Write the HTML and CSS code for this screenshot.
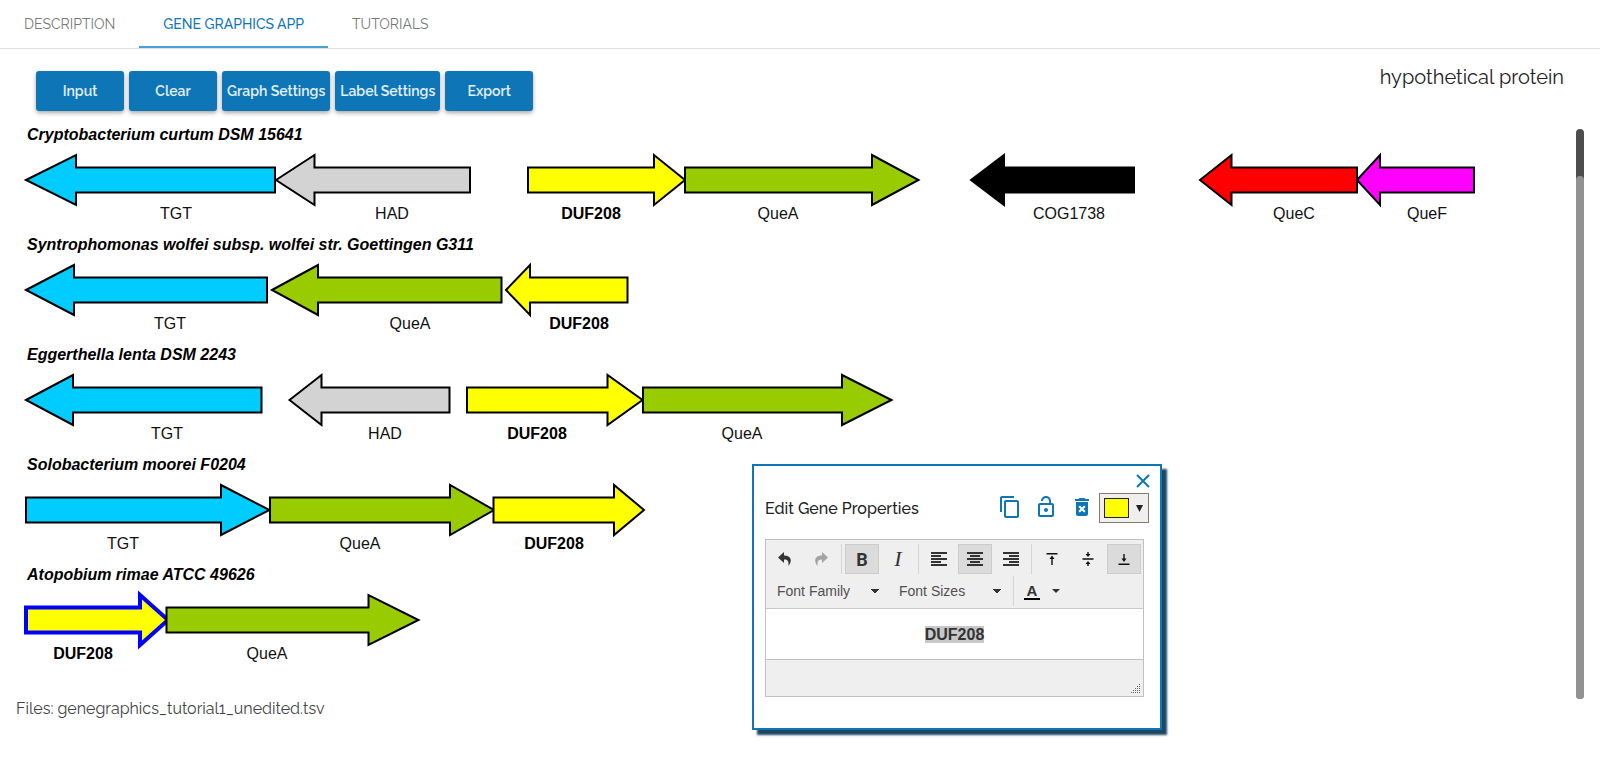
FILE: index.html
```html
<!DOCTYPE html>
<html lang="en">
<head>
<meta charset="utf-8">
<title>Gene Graphics</title>
<link rel="stylesheet" href="styles.css">
</head>
<body>
<nav class="tabs">
  <a class="tab" href="#description">DESCRIPTION</a>
  <a class="tab tab-active" href="#app" aria-current="page">GENE GRAPHICS APP</a>
  <a class="tab" href="#tutorials">TUTORIALS</a>
</nav>
<main class="app">
  <div class="actions">
    <button class="action" type="button">Input</button>
    <button class="action" type="button">Clear</button>
    <button class="action" type="button">Graph Settings</button>
    <button class="action" type="button">Label Settings</button>
    <button class="action" type="button">Export</button>
    <p class="hover-name">hypothetical protein</p>
  </div>
  <div class="viewer">
    <div class="genomes">
      <svg class="genome">
        <text class="organism" x="27" y="11">Cryptobacterium curtum DSM 15641</text>
        <polygon class="gene tgt" points="26,51 76,26 76,38.5 275,38.5 275,63.5 76,63.5 76,76"/>
        <polygon class="gene had" points="276,51 314.5,26 314.5,38.5 470,38.5 470,63.5 314.5,63.5 314.5,76"/>
        <polygon class="gene duf" points="528,38.5 654,38.5 654,26 685,51 654,76 654,63.5 528,63.5"/>
        <polygon class="gene quea" points="685,38.5 872,38.5 872,26 918.5,51 872,76 872,63.5 685,63.5"/>
        <polygon class="gene cog" points="971,51 1004,26 1004,38.5 1134,38.5 1134,63.5 1004,63.5 1004,76"/>
        <polygon class="gene quec" points="1200,51 1231.5,26 1231.5,38.5 1357,38.5 1357,63.5 1231.5,63.5 1231.5,76"/>
        <polygon class="gene quef" points="1357,51 1380,26 1380,38.5 1474,38.5 1474,63.5 1380,63.5 1380,76"/>
        <text class="label" x="176" y="90">TGT</text>
        <text class="label" x="392" y="90">HAD</text>
        <text class="label strong" x="591" y="90">DUF208</text>
        <text class="label" x="778" y="90">QueA</text>
        <text class="label" x="1069" y="90">COG1738</text>
        <text class="label" x="1294" y="90">QueC</text>
        <text class="label" x="1427" y="90">QueF</text>
      </svg>
      <svg class="genome">
        <text class="organism" x="27" y="11">Syntrophomonas wolfei subsp. wolfei str. Goettingen G311</text>
        <polygon class="gene tgt" points="26,51 74,26 74,38.5 267,38.5 267,63.5 74,63.5 74,76"/>
        <polygon class="gene quea" points="272,51 318,26 318,38.5 501.5,38.5 501.5,63.5 318,63.5 318,76"/>
        <polygon class="gene duf" points="506,51 530,26 530,38.5 627.5,38.5 627.5,63.5 530,63.5 530,76"/>
        <text class="label" x="170" y="90">TGT</text>
        <text class="label" x="410" y="90">QueA</text>
        <text class="label strong" x="579" y="90">DUF208</text>
      </svg>
      <svg class="genome">
        <text class="organism" x="27" y="11">Eggerthella lenta DSM 2243</text>
        <polygon class="gene tgt" points="26,51 73,26 73,38.5 261.5,38.5 261.5,63.5 73,63.5 73,76"/>
        <polygon class="gene had" points="289.5,51 321.5,26 321.5,38.5 449.5,38.5 449.5,63.5 321.5,63.5 321.5,76"/>
        <polygon class="gene duf" points="467,38.5 607.5,38.5 607.5,26 642.5,51 607.5,76 607.5,63.5 467,63.5"/>
        <polygon class="gene quea" points="643,38.5 842,38.5 842,26 891.5,51 842,76 842,63.5 643,63.5"/>
        <text class="label" x="167" y="90">TGT</text>
        <text class="label" x="385" y="90">HAD</text>
        <text class="label strong" x="537" y="90">DUF208</text>
        <text class="label" x="742" y="90">QueA</text>
      </svg>
      <svg class="genome">
        <text class="organism" x="27" y="11">Solobacterium moorei F0204</text>
        <polygon class="gene tgt" points="26,38.5 221,38.5 221,26 269.500,51 221,76 221,63.5 26,63.5"/>
        <polygon class="gene quea" points="270,38.5 450,38.5 450,26 494,51 450,76 450,63.5 270,63.5"/>
        <polygon class="gene duf" points="493.5,38.5 614,38.5 614,26 644,51 614,76 614,63.5 493.5,63.5"/>
        <text class="label" x="123" y="90">TGT</text>
        <text class="label" x="360" y="90">QueA</text>
        <text class="label strong" x="554" y="90">DUF208</text>
      </svg>
      <svg class="genome">
        <text class="organism" x="27" y="11">Atopobium rimae ATCC 49626</text>
        <polygon class="gene duf selected" points="26,38.5 140,38.5 140,26 168,51 140,76 140,63.5 26,63.5"/>
        <polygon class="gene quea" points="166.5,38.5 368.5,38.5 368.5,26 418.5,51 368.5,76 368.5,63.5 166.5,63.5"/>
        <text class="label strong" x="83" y="90">DUF208</text>
        <text class="label" x="267" y="90">QueA</text>
      </svg>
    </div>
    <div class="scroll-track"><div class="scroll-thumb"></div></div>
  </div>
  <p class="files">Files: genegraphics_tutorial1_unedited.tsv</p>
</main>

<section class="dialog" role="dialog" aria-labelledby="dialog-title">
  <button class="close" type="button" aria-label="Close">
    <svg class="close-icon" viewBox="0 0 14 14"><path d="M1 1L13 13M13 1L1 13"/></svg>
  </button>
  <header class="dialog-head">
    <h2 class="dialog-title" id="dialog-title">Edit Gene Properties</h2>
    <button class="icon-button" type="button" aria-label="Copy"><svg class="icon" viewBox="0 0 24 24"><path d="M16 1H4c-1.100 0-2 .9-2 2v14h2V3h12V1zm3 4H8c-1.100 0-2 .9-2 2v14c0 1.100.9 2 2 2h11c1.100 0 2-.9 2-2V7c0-1.100-.9-2-2-2zm0 16H8V7h11v14z"/></svg></button>
    <button class="icon-button" type="button" aria-label="Unlock"><svg class="icon" viewBox="0 0 24 24"><path d="M12 17c1.100 0 2-.9 2-2s-.9-2-2-2-2 .9-2 2 .9 2 2 2zm6-9h-1V6c0-2.760-2.240-5-5-5S7 3.240 7 6h1.900c0-1.710 1.390-3.100 3.100-3.100s3.100 1.390 3.100 3.100v2H6c-1.100 0-2 .9-2 2v10c0 1.100.9 2 2 2h12c1.100 0 2-.9 2-2V10c0-1.100-.9-2-2-2zm0 12H6V10h12v10z"/></svg></button>
    <button class="icon-button" type="button" aria-label="Delete"><svg class="icon" viewBox="0 0 24 24"><path fill-rule="evenodd" d="M6 19c0 1.100.9 2 2 2h8c1.100 0 2-.9 2-2V7H6v12zM8.460 11.880l1.410-1.410L12 12.590l2.120-2.120 1.410 1.410L13.410 14l2.120 2.120-1.410 1.410L12 15.410l-2.120 2.120-1.410-1.410L10.590 14l-2.130-2.120zM15.500 4l-1-1h-5l-1 1H5v2h14V4z"/></svg></button>
    <button class="color-button" type="button" aria-label="Gene color"><span class="swatch"></span><svg class="color-arrow" viewBox="0 0 7 7"><path d="M0 0H7L3.500 7z"/></svg></button>
  </header>
  <div class="editor">
    <div class="editor-bar">
      <div class="editor-row">
        <div class="group">
          <button class="tool" type="button" aria-label="Undo"><svg class="tool-icon" viewBox="0 0 16 16"><path d="M7 1L1 6.500 7 12V8.500C10.500 8.300 12 10 11.500 15 15.500 10 14.500 4.500 7 4.500z"/></svg></button>
          <button class="tool" type="button" aria-label="Redo" disabled><svg class="tool-icon" viewBox="0 0 16 16"><path d="M9 1L15 6.500 9 12V8.500C5.500 8.300 4 10 4.500 15 .5 10 1.500 4.500 9 4.500z"/></svg></button>
        </div>
        <div class="group">
          <button class="tool tool-on bold" type="button" aria-pressed="true">B</button>
          <button class="tool italic" type="button">I</button>
        </div>
        <div class="group">
          <button class="tool" type="button" aria-label="Align left"><svg class="tool-icon" viewBox="0 0 16 16"><path d="M0 1h16v2H0zM0 4h10v2H0zM0 7h16v2H0zM0 10h10v2H0zM0 13h16v2H0z"/></svg></button>
          <button class="tool tool-on" type="button" aria-label="Align center" aria-pressed="true"><svg class="tool-icon" viewBox="0 0 16 16"><path d="M0 1h16v2H0zM3 4h10v2H3zM0 7h16v2H0zM3 10h10v2H3zM0 13h16v2H0z"/></svg></button>
          <button class="tool" type="button" aria-label="Align right"><svg class="tool-icon" viewBox="0 0 16 16"><path d="M0 1h16v2H0zM6 4h10v2H6zM0 7h16v2H0zM6 10h10v2H6zM0 13h16v2H0z"/></svg></button>
        </div>
        <div class="group">
          <button class="tool" type="button" aria-label="Align top"><svg class="tool-icon" viewBox="0 0 16 16"><path class="ink" d="M2.500 2h11v1.500h-11zM8 4.500L10.500 8H8.700v6H7.300V8H5.500z"/></svg></button>
          <button class="tool" type="button" aria-label="Align middle"><svg class="tool-icon" viewBox="0 0 16 16"><path class="ink" d="M2.500 7.300h11v1.400h-11zM7.300 1h1.400v2h1.800L8 6 5.500 3h1.800zM8 10l2.500 3H8.700v2H7.300v-2H5.500z"/></svg></button>
          <button class="tool tool-on" type="button" aria-label="Align bottom" aria-pressed="true"><svg class="tool-icon" viewBox="0 0 16 16"><path class="ink" d="M2.500 12.500h11V14h-11zM7.300 3h1.400v4.500h1.800L8 11 5.500 7.500h1.800z"/></svg></button>
        </div>
      </div>
      <div class="editor-row">
        <div class="group">
          <select class="picker" aria-label="Font Family"><option>Font Family</option></select>
          <select class="picker" aria-label="Font Sizes"><option>Font Sizes</option></select>
        </div>
        <div class="group">
          <button class="text-color" type="button" aria-label="Text color"><span class="text-color-letter">A</span><svg class="caret" viewBox="0 0 8 4"><path d="M0 0H8L4 4z"/></svg></button>
        </div>
      </div>
    </div>
    <div class="editor-body" contenteditable="true"><span class="marked">DUF208</span></div>
    <div class="editor-foot">
      <svg class="grip" viewBox="0 0 10 10" shape-rendering="crispEdges"><path d="M8 0h1v1H8zM6 2h1v1H6zM8 2h1v1H8zM4 4h1v1H4zM6 4h1v1H6zM8 4h1v1H8zM2 6h1v1H2zM4 6h1v1H4zM6 6h1v1H6zM8 6h1v1H8zM0 8h1v1H0zM2 8h1v1H2zM4 8h1v1H4zM6 8h1v1H6zM8 8h1v1H8z"/></svg>
    </div>
  </div>
</section>
</body>
</html>
```
FILE: styles.css
```css
* { box-sizing: border-box; }
body {
  margin: 0;
  background: #fff;
  color: #222;
  font-family: Raleway, Lato, sans-serif;
  font-size: 16px;
}
button, select { font-family: inherit; margin: 0; padding: 0; border: 0; background: none; }

.tabs { display: flex; height: 49px; border-bottom: 1px solid #e0e0e0; }
.tab {
  display: flex;
  align-items: center;
  height: 48px;
  padding: 2px 24px 0;
  color: #777;
  font-size: 14px;
  text-decoration: none;
  border-bottom: 2px solid transparent;
}
.tab-active { color: #0e76b6; border-bottom-color: #45a1d8; font-weight: 500; }

.app { padding: 22px 16px 0 0; }
.actions { display: flex; gap: 5px; padding: 0 20px 0 36px; }
.action {
  min-width: 88px;
  height: 40px;
  padding: 0 5px;
  border-radius: 3px;
  background: #0e76b6;
  box-shadow: 0 2px 4px rgba(0, 0, 0, .35);
  color: #e4f0f8;
  font-size: 14px;
  font-weight: 600;
}
.hover-name { margin: 0 0 0 auto; font-size: 20px; line-height: 12px; }

.viewer { display: flex; height: 570px; margin-top: 18px; }
.genomes { flex: 1; min-width: 0; overflow-x: clip; }
.genome { display: block; width: 100%; height: 110px; overflow: visible; font-family: "Liberation Sans", Arial, sans-serif; font-size: 16px; }
.organism { font-weight: bold; font-style: italic; fill: #000; }
.label { text-anchor: middle; fill: #111; }
.strong { font-weight: bold; fill: #000; }
.gene { stroke: #000; stroke-width: 2; }
.tgt { fill: #0cf; }
.had { fill: #d3d3d3; }
.duf { fill: #ff0; }
.quea { fill: #9c0; }
.cog { fill: #000; }
.quec { fill: #f00; }
.quef { fill: #f0f; }
.selected { stroke: #00f; stroke-width: 4; }

.scroll-track { width: 8px; padding-top: 47px; border-radius: 4px; background: #4d4d4d; }
.scroll-thumb { height: 100%; border-radius: 4px; background: #929292; }
.files { margin: 0; padding-left: 16px; color: #444; font-size: 16px; line-height: 20px; }

.dialog {
  position: absolute;
  left: 752px;
  top: 464px;
  width: 410px;
  padding: 27px 16px 31px 11px;
  border: 2px solid #0e76b6;
  background: #fff;
  box-shadow: 5px 5px 2px #1c4863;
}
.close { position: absolute; right: 10px; top: 8px; width: 14px; height: 14px; }
.close-icon { display: block; stroke: #0e76b6; stroke-width: 2; }
.dialog-head { display: flex; align-items: center; height: 30px; margin-right: -5px; }
.dialog-title { flex: 1; margin: 0; font-size: 16px; font-weight: 500; white-space: nowrap; }
.icon-button { display: flex; width: 36px; height: 26px; padding: 0 5px 0 7px; }
.icon { display: block; width: 24px; height: 24px; fill: #0e76b6; }
.color-button { display: flex; align-items: center; gap: 7px; width: 50px; height: 30px; padding: 0 4px; border: 1px solid #8f7860; background: #efefef; }
.swatch { width: 25px; height: 20px; border: 1px solid #222; background: #ff0; }
.color-arrow { width: 7px; height: 7px; fill: #222; }

.editor { margin-top: 16px; border: 1px solid #c0c0c0; font-family: "Liberation Sans", Arial, sans-serif; }
.editor-bar { display: grid; gap: 2px; padding: 4px 2px 2px; border-bottom: 1px solid #c8c8c8; background: #efefef; }
.editor-row { display: flex; }
.group { display: flex; gap: 2px; }
.group + .group { margin-left: 3px; padding-left: 3px; border-left: 1px solid #d4d4d4; }
.tool { display: grid; place-items: center; width: 34px; height: 30px; color: #333; border: 1px solid transparent; }
.tool:disabled { opacity: .4; }
.tool-on { border-color: #ccc; background: #dbdbdb; }
.tool-icon { width: 16px; height: 16px; fill: #333; }
.ink { fill: #111; }
.bold { font-family: Roboto, sans-serif; font-size: 18px; font-weight: bold; }
.italic { font-family: "Liberation Serif", serif; font-size: 22px; font-style: italic; }
.picker {
  appearance: none;
  width: 120px;
  height: 30px;
  padding: 0 9px;
  color: #505050;
  font-size: 14px;
  background: conic-gradient(from -45deg at 50% 100%, #333 90deg, transparent 0) right 9px center / 8px 4px no-repeat;
  background: linear-gradient(45deg, transparent 50%, #333 50%) right 13px center / 4px 4px no-repeat, linear-gradient(-45deg, transparent 50%, #333 50%) right 9px center / 4px 4px no-repeat;
}
.text-color { display: flex; align-items: center; gap: 12px; height: 30px; padding-left: 7px; }
.text-color-letter { width: 16px; height: 17px; border-bottom: 2px solid #000; color: #333; font-size: 15px; font-weight: bold; line-height: 15px; }
.caret { width: 8px; height: 4px; fill: #333; }
.editor-body { display: grid; place-items: center; height: 50px; color: #333; font-size: 16px; font-weight: bold; line-height: 17px; }
.marked { background: #c8c8c8; }
.editor-foot { display: flex; justify-content: flex-end; align-items: flex-end; height: 37px; padding: 0 2px 2px; border-top: 1px solid #c0c0c0; background: #efefef; }
.grip { width: 10px; height: 10px; fill: #666; }
```
